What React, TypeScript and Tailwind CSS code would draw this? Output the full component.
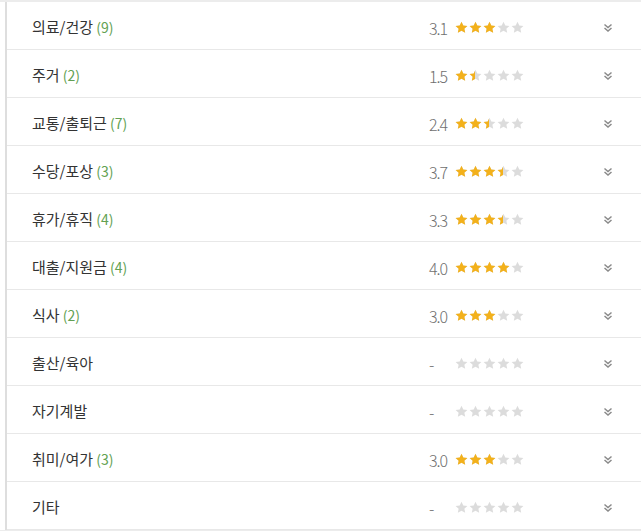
import React from "react";

type Item = { label: string; count?: number; rating?: number };

const items: Item[] = [
  { label: "의료/건강", count: 9, rating: 3.1 },
  { label: "주거", count: 2, rating: 1.5 },
  { label: "교통/출퇴근", count: 7, rating: 2.4 },
  { label: "수당/포상", count: 3, rating: 3.7 },
  { label: "휴가/휴직", count: 4, rating: 3.3 },
  { label: "대출/지원금", count: 4, rating: 4.0 },
  { label: "식사", count: 2, rating: 3.0 },
  { label: "출산/육아" },
  { label: "자기계발" },
  { label: "취미/여가", count: 3, rating: 3.0 },
  { label: "기타" },
];

const Star = ({ color }: { color: string }) => (
  <svg width="13" height="13" viewBox="0 0 24 24" className="shrink-0">
    <path
      d="M12 1.2l3.3 7 7.6.9-5.6 5.2 1.5 7.6L12 18.1 5.2 21.9l1.5-7.6L1.1 9.1l7.6-.9z"
      fill={color}
    />
  </svg>
);

const Stars = ({ rating }: { rating: number }) => {
  const filled = Math.round(rating * 2) / 2;
  const widthPx = Math.floor(filled) * 14 + (filled % 1 ? 6 : 0);
  return (
    <div className="relative w-[70px] h-[13px]">
      <div className="absolute inset-0 flex gap-[1px]">
        {[0, 1, 2, 3, 4].map((i) => (
          <Star key={i} color="#dcdcdc" />
        ))}
      </div>
      <div className="absolute left-0 top-0 h-[13px] overflow-hidden" style={{ width: widthPx }}>
        <div className="flex gap-[1px] w-[70px]">
          {[0, 1, 2, 3, 4].map((i) => (
            <Star key={i} color="#f3b11b" />
          ))}
        </div>
      </div>
    </div>
  );
};

const Chevron = () => (
  <svg width="10" height="10" viewBox="0 0 10 10" fill="none" stroke="#8a8a8a" strokeWidth="1.5">
    <path d="M1.5 1.5l3.5 3 3.5-3" />
    <path d="M1.5 5l3.5 3 3.5-3" />
  </svg>
);

export default function App() {
  return (
    <div className="w-[641px] h-[531px] bg-white overflow-hidden" style={{ fontFamily: '"Noto Sans CJK KR", "Noto Sans", sans-serif' }}>
      <div className="h-[2px] bg-[#ececec]" />
      <div className="pl-[5px]">
        <div className="border-l-2 border-[#dedede]">
          {items.map((it, idx) => (
            <div key={idx} className="flex items-center h-[48px] border-b border-[#e8e8e8] pl-[25px] pr-[28px] pt-[4px]">
              <div className="flex-1 text-[15px] text-[#333]">
                {it.label}
                {it.count !== undefined && (
                  <span className="text-[#62a152] text-[14px]"> ({it.count})</span>
                )}
              </div>
              <div className="w-[26px] text-[16px] font-light text-[#6f6f6f] tracking-[-1px]">
                {it.rating !== undefined ? it.rating.toFixed(1) : "-"}
              </div>
              <Stars rating={it.rating ?? 0} />
              <div className="w-[78px]" />
              <Chevron />
            </div>
          ))}
        </div>
      </div>
      <div className="h-[3px] bg-[#ececec]" />
    </div>
  );
}
